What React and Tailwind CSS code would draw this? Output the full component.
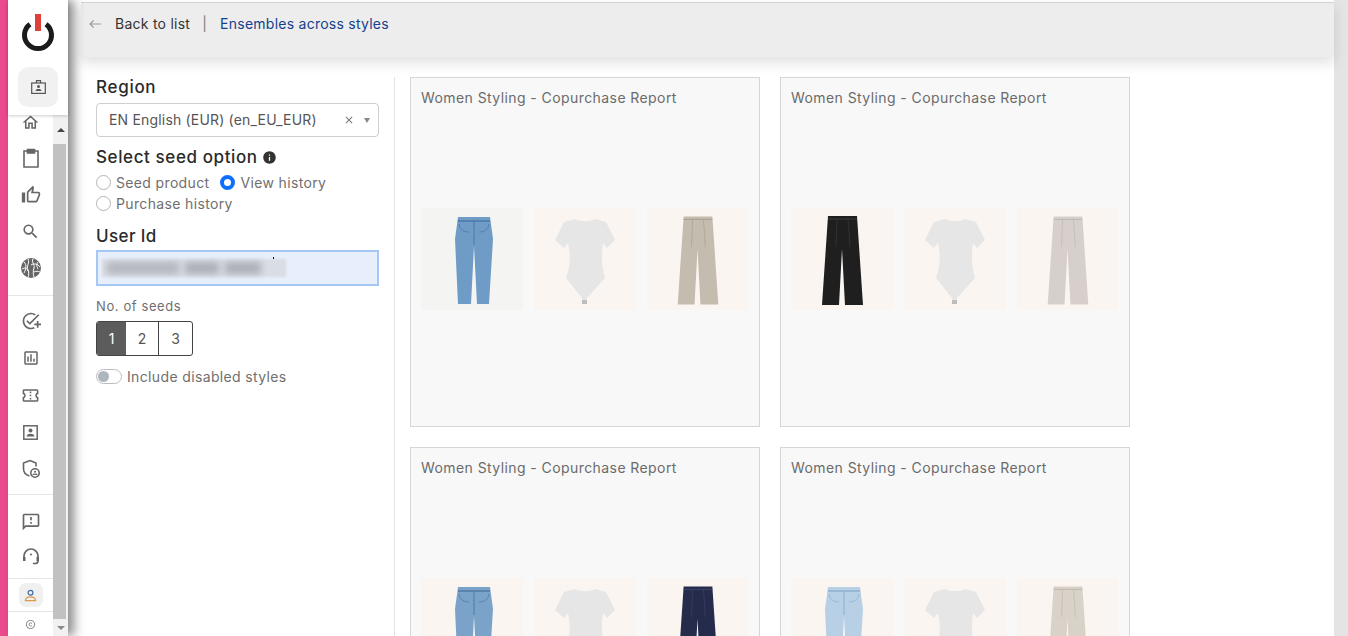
import {
  MdOutlineHome,
  MdOutlineThumbUp,
  MdSearch,
  MdOutlineAddTask,
  MdOutlineAssessment,
  MdOutlineConfirmationNumber,
  MdOutlineSmsFailed,
  MdOutlineWest,
  MdInfo,
  MdClose,
  MdCopyright,
} from "react-icons/md";

const font = { fontFamily: "Inter" };

// Icons the packages don't have
function GlobeFire() {
  return (
    <svg width="22" height="22" viewBox="0 0 22 22" className="text-[#666]">
      <circle cx="11" cy="11" r="10" fill="currentColor" />
      <path d="M4 5c3 3 2 7 0 11M8 2c2 4-2 7 0 11 1 3 1 5 0 7M13 2c-2 3 2 5 1 9-1 3-1 6 0 9M18 5c-2 2-1 5 0 7M2 12c3-2 5-1 6 2M11 8c3-2 7-1 9 2M14 15c2-1 4-1 6 0" fill="none" stroke="#fff" strokeWidth="1" />
    </svg>
  );
}

function Clipboard() {
  return (
    <svg width="16" height="20" viewBox="0 0 16 20" fill="none" stroke="#666" strokeWidth="1.600">
      <path d="M4.500 3H1v16h14V3h-3.500" />
      <path d="M4.500 1.500h7V5h-7z" fill="#666" />
    </svg>
  );
}

function Portrait() {
  return (
    <svg width="15" height="15" viewBox="0 0 15 15" fill="none" stroke="#666" strokeWidth="1.500">
      <rect x=".8" y=".8" width="13.400" height="13.400" />
      <circle cx="7.500" cy="5.500" r="2" fill="#666" stroke="none" />
      <path d="M3.500 11.500c.4-2 2-2.700 4-2.700s3.600.7 4 2.700z" fill="#666" stroke="none" />
    </svg>
  );
}

function BadgeIcon() {
  return (
    <svg width="15" height="14" viewBox="0 0 15 14" fill="none" stroke="#555" strokeWidth="1.200">
      <rect x=".7" y="3" width="13.600" height="10.400" />
      <path d="M5.500 3V.7h4V3" />
      <circle cx="7.500" cy="6.500" r="1.500" fill="#555" stroke="none" />
      <path d="M4.500 11c.2-1.500 1.300-2 3-2s2.800.5 3 2z" fill="#555" stroke="none" />
    </svg>
  );
}

function ShieldClock() {
  return (
    <svg width="20" height="20" viewBox="0 0 20 20" fill="none" stroke="#666" strokeWidth="1.600">
      <path d="M9 1.500 2.500 4v5.500c0 3.800 2.600 6.600 6 7.500" />
      <path d="M9 1.500 15 4v3.500" />
      <circle cx="14" cy="14" r="4.200" />
      <circle cx="14" cy="12.800" r="1" fill="#666" stroke="none" />
      <path d="M11.800 16c.6-1.200 3.800-1.200 4.400 0" strokeWidth="1.200" />
    </svg>
  );
}

function Agent() {
  return (
    <svg width="18" height="18" viewBox="0 0 18 18" fill="none" stroke="#666" strokeWidth="1.700">
      <path d="M2 10V8a7 7 0 0 1 14 0v5c0 1.500-1 2.500-3 2.500h-2" />
      <path d="M1 13V9h2.500v4zM14.500 13V9H17v4z" fill="#666" stroke="none" />
      <circle cx="9" cy="6.500" r="1" fill="#666" stroke="none" />
    </svg>
  );
}

function UserGradient() {
  return (
    <svg width="13" height="13" viewBox="0 0 14 14" fill="none" strokeWidth="1.300">
      <circle cx="7" cy="4" r="2.600" stroke="#3f6fa8" />
      <path d="M1.500 12.500c.3-3 2.500-4 5.500-4s5.200 1 5.500 4z" stroke="#d99a4e" />
    </svg>
  );
}

function Logo() {
  return (
    <svg width="34" height="38" viewBox="0 0 34 38">
      <path d="M9 10.200a13.500 13.500 0 1 0 16 0" fill="none" stroke="#1b1b1b" strokeWidth="5" />
      <rect x="14" y="0" width="6" height="17" fill="#e0403a" />
    </svg>
  );
}

function Jeans({ color, dark }) {
  return (
    <svg viewBox="0 0 102 102" className="w-full h-full blur-[0.4px]">
      <path d="M37 9h32l3 22-4 65H56L53 38l-3 58H37l-3-65z" fill={color} />
      <path d="M37 13h32" stroke={dark} strokeWidth="1.500" />
      <path d="M53 13v24" stroke={dark} strokeWidth="1" />
      <path d="M38 16c1 6 5 8 10 8M68 16c-1 6-5 8-10 8" stroke={dark} strokeWidth=".8" fill="none" />
    </svg>
  );
}

function Bodysuit() {
  return (
    <svg viewBox="0 0 102 102" className="w-full h-full blur-[0.4px]">
      <path d="M41 11c5 3 15 3 20 0l11 3 9 18-8 8-4-5c-2 13-1 25 2 35L53 90v6h-5v-6L32 70c4-10 5-22 2-35l-4 5-9-8 9-18z" fill="#e6e6e6" />
      <path d="M48 92h5v4h-5z" fill="#bdbdbd" />
    </svg>
  );
}

function Trousers({ color, dark }) {
  return (
    <svg viewBox="0 0 102 102" className="w-full h-full blur-[0.4px]">
      <path d="M37 8h29l6 89H54l-3-56-3 56H31z" fill={color} />
      <path d="M37 11h29" stroke={dark} strokeWidth="1" />
      <path d="M46 11l-1 28M57 11l2 28" stroke={dark} strokeWidth=".7" />
    </svg>
  );
}

const sets = [
  { bg: "bg-[#f4f4f3]", first: <Jeans color="#6f9bc7" dark="#4d78a6" />, third: <Trousers color="#c4bcae" dark="#a89f90" /> },
  { bg: "bg-[#fbf5f2]", first: <Trousers color="#1f1f20" dark="#3a3a3a" />, third: <Trousers color="#d6cfcb" dark="#bdb6b1" /> },
  { bg: "bg-[#fbf5f2]", first: <Jeans color="#7ba3c9" dark="#4f7aa5" />, third: <Trousers color="#252b4a" dark="#3c4365" /> },
  { bg: "bg-[#fbf5f2]", first: <Jeans color="#b7d0e6" dark="#8fb0cd" />, third: <Trousers color="#d9d2c8" dark="#c0b8ac" /> },
];

function ReportCard({ set }) {
  return (
    <div className="w-[350px] h-[350px] shrink-0 border border-[#d4d6da] bg-[#f8f8f8] px-[10px] pt-[9px]">
      <div className="text-[14px] leading-[21px] tracking-[0.42px] text-[#6b6b6b] whitespace-nowrap">Women Styling - Copurchase Report</div>
      <div className="flex gap-[11px] mt-[100px]">
        <div className={`w-[102px] h-[102px] ${set.bg}`}>{set.first}</div>
        <div className="w-[102px] h-[102px] bg-[#fbf5f2]"><Bodysuit /></div>
        <div className="w-[101px] h-[102px] bg-[#fbf5f2]">{set.third}</div>
      </div>
    </div>
  );
}

function NavIcon({ children, h = "h-[36.500px]" }) {
  return <div className={`${h} flex items-center justify-center text-[#666]`}>{children}</div>;
}

function Radio({ label, checked }) {
  return (
    <label className="flex items-center gap-[5px] h-[21px]">
      {checked ? (
        <span className="w-[15px] h-[15px] rounded-full border-[4px] border-[#0d6efd] bg-white" />
      ) : (
        <span className="w-[15px] h-[15px] rounded-full border border-[#b5b5b5] bg-white" />
      )}
      <span className="text-[14px] tracking-[0.35px] text-[#6f6f6f]">{label}</span>
    </label>
  );
}

export default function App() {
  return (
    <div className="h-screen w-full flex overflow-hidden bg-white" style={font}>
      <div className="w-[8px] bg-[#ec4a8f] shrink-0" />

      {/* sidebar */}
      <div className="w-[60px] shrink-0 flex flex-col relative z-20 bg-white shadow-[6px_0_10px_rgba(0,0,0,0.45)]">
        <div className="h-[115px] shrink-0 bg-white flex flex-col items-center pt-[14px] shadow-[0_1px_3px_rgba(0,0,0,0.2)] relative z-10">
          <Logo />
          <div className="mt-[15px] w-[40px] h-[40px] rounded-[10px] bg-[#f1f1f1] flex items-center justify-center">
            <BadgeIcon />
          </div>
        </div>
        <div className="flex-1 flex min-h-0">
          <div className="w-[45px] flex flex-col -mt-[1px]">
            <div className="pb-[8px] border-b border-[#e6e6e6]">
              <NavIcon h="h-[25px] pb-[8px]"><MdOutlineHome size={19} /></NavIcon>
              <NavIcon h="h-[37px]"><Clipboard /></NavIcon>
              <NavIcon h="h-[37px]"><MdOutlineThumbUp size={20} /></NavIcon>
              <NavIcon h="h-[36px]"><MdSearch size={19} /></NavIcon>
              <NavIcon h="h-[38px]"><GlobeFire /></NavIcon>
            </div>
            <div className="pt-[7px] pb-[7px] border-b border-[#e6e6e6]">
              <NavIcon><MdOutlineAddTask size={20} /></NavIcon>
              <NavIcon><MdOutlineAssessment size={18} /></NavIcon>
              <NavIcon h="h-[38px]"><MdOutlineConfirmationNumber size={19} /></NavIcon>
              <NavIcon><Portrait /></NavIcon>
              <NavIcon><ShieldClock /></NavIcon>
            </div>
            <div className="pt-[8px] pb-[4px] border-b border-[#e6e6e6]">
              <NavIcon h="h-[37px]"><MdOutlineSmsFailed size={20} /></NavIcon>
              <NavIcon h="h-[34px]"><Agent /></NavIcon>
            </div>
            <div className="h-[33px] border-b border-[#e6e6e6] flex items-center justify-center">
              <div className="w-[24px] h-[24px] rounded-[7px] bg-[#f0f0f0] flex items-center justify-center"><UserGradient /></div>
            </div>
            <div className="flex-1 flex items-center justify-center text-[#8a8a8a]"><MdCopyright size={11} /></div>
          </div>
          <div className="w-[15px] flex flex-col bg-[#f1f1f1]">
            <div className="h-[29px] flex items-center justify-center">
              <span className="w-0 h-0 border-x-[4px] border-x-transparent border-b-[4px] border-b-[#444]" />
            </div>
            <div className="flex-1 bg-[#c1c1c1] mr-[2px]" />
            <div className="h-[17px] flex items-center justify-center">
              <span className="w-0 h-0 border-x-[4px] border-x-transparent border-t-[4px] border-t-[#888]" />
            </div>
          </div>
        </div>
      </div>

      <div className="w-[13px] shrink-0" />

      {/* main */}
      <div className="flex-1 min-w-0 flex flex-col">
        <div className="mt-[2px] h-[55px] shrink-0 bg-[#ededed] border-t border-t-[#d3d3d3] flex items-start pt-[10px] pl-[7px] shadow-[0_6px_12px_rgba(0,0,0,0.12)] relative z-10 text-[14px] leading-[21px] tracking-[0.25px]">
          <MdOutlineWest size={14} className="text-[#999] mt-[4px]" />
          <span className="ml-[13px] text-[#333]">Back to list</span>
          <span className="ml-[12px] text-[#777]">|</span>
          <span className="ml-[13px] text-[#14418b]">Ensembles across styles</span>
        </div>

        <div className="flex-1 min-h-0 flex">
          {/* filters */}
          <div className="w-[313px] shrink-0 pl-[15px] pt-[20px] flex flex-col">
            <div className="text-[17px] leading-[21px] font-medium tracking-[0.7px] text-[#2b2b2b]">Region</div>
            <div className="mt-[5px] h-[34px] w-[283px] border border-[#cfcfcf] rounded-[4px] flex items-center pl-[12px] pr-[8px]">
              <span className="flex-1 text-[14px] tracking-[0.18px] leading-[21px] pb-[2px] text-[#555] whitespace-nowrap">EN English (EUR) (en_EU_EUR)</span>
              <MdClose size={12} className="text-[#777] mr-[9px]" />
              <span className="w-0 h-0 border-x-[3px] border-x-transparent border-t-[5px] border-t-[#888]" />
            </div>
            <div className="mt-[10px] flex items-center gap-[4px] text-[17px] leading-[21px] font-medium tracking-[0.6px] text-[#2b2b2b]">
              Select seed option <MdInfo size={15} className="text-[#333]" />
            </div>
            <div className="mt-[4px] flex gap-[11px]">
              <Radio label="Seed product" />
              <Radio label="View history" checked />
            </div>
            <Radio label="Purchase history" />
            <div className="mt-[12px] text-[17px] leading-[21px] font-medium tracking-[0.4px] text-[#2b2b2b]">User Id</div>
            <div className="mt-[3px] h-[36px] w-[283px] border-2 border-[#a5c7f5] bg-[#e8effc] relative flex items-center pl-[4px] overflow-hidden">
              <div className="h-[18px] w-[184px] bg-[#d9dde4] blur-[1px] flex items-center gap-[6px] px-[5px]">
                <span className="h-[12px] w-[72px] bg-[#b4b7bd] blur-[3px]" />
                <span className="h-[12px] w-[34px] bg-[#adb0b6] blur-[3px]" />
                <span className="h-[12px] w-[36px] bg-[#adb0b6] blur-[3px]" />
              </div>
              <span className="absolute left-[175px] top-[5px] w-px h-[2px] bg-black" />
            </div>
            <div className="mt-[10px] text-[13px] leading-[21px] tracking-[0.6px] text-[#6f6f6f]">No. of seeds</div>
            <div className="mt-[4px] h-[35px] w-[97px] flex border border-[#444] rounded-[3px] overflow-hidden text-[14px]">
              <div className="w-[29px] bg-[#5c5c5c] text-white flex items-center justify-center">1</div>
              <div className="w-[33px] border-r border-[#444] text-[#555] flex items-center justify-center">2</div>
              <div className="flex-1 text-[#555] flex items-center justify-center">3</div>
            </div>
            <div className="mt-[10px] flex items-center gap-[5px]">
              <div className="w-[26px] h-[15px] rounded-full border border-[#bdbdbd] bg-white flex items-center pl-[1px]">
                <span className="w-[11px] h-[11px] rounded-full bg-[#adb5bd]" />
              </div>
              <span className="text-[14px] leading-[21px] tracking-[0.36px] text-[#6f6f6f]">Include disabled styles</span>
            </div>
          </div>

          <div className="w-px bg-[#e4e4e4] mt-[20px] shrink-0" />

          {/* report cards */}
          <div className="pl-[15px] pt-[20px] grid grid-cols-[350px_350px] gap-[20px] content-start">
            {sets.map((set, i) => (
              <ReportCard key={i} set={set} />
            ))}
          </div>
        </div>
      </div>

      <div className="w-[14px] shrink-0 bg-[#e4e4e4]" />
    </div>
  );
}
